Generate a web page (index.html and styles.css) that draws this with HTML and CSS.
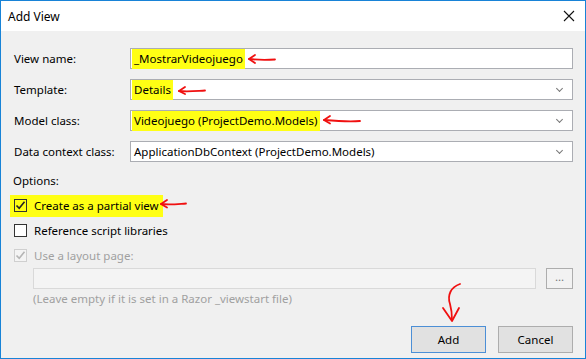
FILE: index.html
```html
<!DOCTYPE html>
<html lang="en">
<head>
    <meta charset="UTF-8">
    <title>Add View</title>
    <link rel="stylesheet" href="styles.css">
</head>
<body>

<div class="dialog">
    <div class="titlebar">
        <span class="title">Add View</span>
        <svg class="close" width="12" height="12" viewBox="0 0 12 12"><path d="M1 1L11 11M11 1L1 11" stroke="#111" stroke-width="1.1" fill="none"/></svg>
    </div>

    <div class="content">
        <div class="field">
            <label>View name:</label>
            <div class="box"><span class="mark">_MostrarVideojuego</span></div>
        </div>
        <div class="field">
            <label>Template:</label>
            <div class="box select"><span class="mark">Details</span><span class="chev"></span></div>
        </div>
        <div class="field">
            <label>Model class:</label>
            <div class="box select"><span class="mark">Videojuego (ProjectDemo.Models)</span><span class="chev"></span></div>
        </div>
        <div class="field">
            <label>Data context class:</label>
            <div class="box select"><span>ApplicationDbContext (ProjectDemo.Models)</span><span class="chev"></span></div>
        </div>

        <div class="options">
            <div class="line">Options:</div>
            <div class="line">
                <span class="check-row mark-row">
                    <span class="cb"><svg width="11" height="11" viewBox="0 0 11 11"><path d="M1.5 5.5L4.2 8.3L9.5 1.8" stroke="#222" stroke-width="1.6" fill="none"/></svg></span>
                    Create as a partial view
                </span>
            </div>
            <div class="line">
                <span class="check-row"><span class="cb"></span>Reference script libraries</span>
            </div>
            <div class="line disabled">
                <span class="check-row"><span class="cb"><svg width="11" height="11" viewBox="0 0 11 11"><path d="M1.5 5.5L4.2 8.3L9.5 1.8" stroke="#b5b5b5" stroke-width="1.6" fill="none"/></svg></span>Use a layout page:</span>
            </div>
            <div class="layout-row">
                <div class="box off"></div>
                <div class="browse">...</div>
            </div>
            <div class="hint">(Leave empty if it is set in a Razor _viewstart file)</div>
        </div>

        <div class="actions">
            <button class="btn default">Add</button>
            <button class="btn">Cancel</button>
        </div>
    </div>

    <!-- hand drawn red arrows on top of the screenshot -->
    <svg class="notes" width="586" height="359" viewBox="0 0 586 359">
        <g stroke="#f01010" stroke-width="1.8" fill="none" stroke-linecap="round" stroke-linejoin="round">
            <path d="M249 59 C258 60 266 60 275 59.5"/>
            <path d="M255 55 L249 59 L255 63"/>
            <path d="M179 91 C188 92 196 91 205 90.5"/>
            <path d="M185 87 L179 91 L185 94"/>
            <path d="M324 120 C336 121 348 122 360 121"/>
            <path d="M330 116 L324 120 L330 123.5"/>
            <path d="M161 204 C170 205 178 204 186 203.5"/>
            <path d="M167 200 L161 204 L167 207.5"/>
            <path d="M460 284 C451 287 447 295 450 304 C452 311 452 316 452 320"/>
            <path d="M443 308 L452 321 L459 308"/>
        </g>
    </svg>
</div>

</body>
</html>
```

FILE: styles.css
```css
body {
    margin: 0;
    padding: 0;
    font-family: "Segoe UI", "Noto Sans", sans-serif;
    font-size: 11.5px;
    color: #000;
}

.dialog {
    position: relative;
    width: 586px;
    height: 359px;
    box-sizing: border-box;
    border: 1px solid #1883d7;
    background: #f0f0f0;
}

.titlebar {
    height: 30px;
    background: #fff;
    display: flex;
    align-items: center;
    justify-content: space-between;
    padding: 0 10px 0 7px;
}
.title { font-size: 12px; }

.content { padding: 17px 12px 0 12px; }

.field {
    display: flex;
    align-items: center;
    height: 21px;
    margin-bottom: 10px;
}
.field label { width: 117px; padding-left: 1px; box-sizing: border-box; }

.box {
    flex: 1;
    height: 21px;
    box-sizing: border-box;
    border: 1px solid #abadb3;
    background: #fff;
    display: flex;
    align-items: center;
    padding-left: 3px;
}
.select { justify-content: space-between; padding-right: 10px; }
.chev {
    width: 4px;
    height: 4px;
    border-right: 1px solid #777;
    border-bottom: 1px solid #777;
    transform: rotate(45deg);
    margin-top: -3px;
}

.mark {
    background: #ffff14;
    padding: 2px 2px 3px 2px;
    margin-left: -2px;
}

.options { margin-top: -4px; }
.line { height: 25px; display: flex; align-items: center; }

.check-row { display: inline-flex; align-items: center; gap: 7px; padding-left: 1px; }
.mark-row { background: #ffff14; padding: 3px 4px 4px 4px; margin-left: -3px; }

.cb {
    width: 13px;
    height: 13px;
    box-sizing: border-box;
    border: 1px solid #333;
    background: #fff;
    display: flex;
    align-items: center;
    justify-content: center;
}
.mark-row .cb { background: transparent; }

.disabled { color: #a0a0a0; }
.disabled .cb { border-color: #cfcfcf; background: #f4f4f4; }

.layout-row {
    display: flex;
    gap: 10px;
    margin-left: 20px;
    height: 21px;
}
.box.off { border-color: #d9d9d9; background: #f4f4f4; }
.browse {
    width: 27px;
    box-sizing: border-box;
    border: 1px solid #adadad;
    background: #f2f2f2;
    color: #777;
    text-align: center;
    line-height: 15px;
}

.hint {
    margin-left: 20px;
    height: 20px;
    line-height: 20px;
    color: #a0a0a0;
}

.actions {
    display: flex;
    justify-content: flex-end;
    gap: 12px;
    margin-top: 17px;
}
.btn {
    width: 75px;
    height: 27px;
    font: inherit;
    background: #e1e1e1;
    border: 1px solid #adadad;
    color: #000;
    padding: 0;
}
.btn.default { border-color: #4c8fd6; }

.notes {
    position: absolute;
    left: -1px;
    top: -1px;
    pointer-events: none;
}
```
